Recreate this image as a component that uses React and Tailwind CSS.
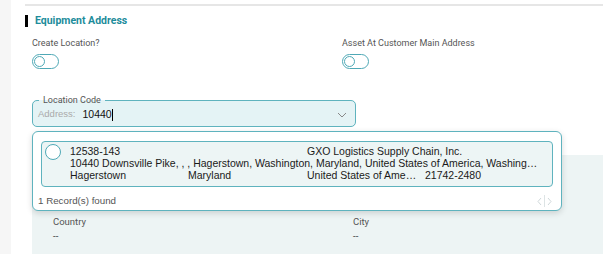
import React from 'react';

const Toggle = () => (
    <div className="w-[27px] h-[15px] rounded-full border border-[#4fa9b6] bg-white flex items-center pl-[1px]">
        <div className="w-[11px] h-[11px] rounded-full border border-[#4fa9b6] bg-white" />
    </div>
);

const App = () => {
    return (
        <div className="w-[603px] h-[254px] overflow-hidden bg-white flex font-['Roboto',sans-serif]">
            <div className="w-[11px] shrink-0 bg-[#f6f6f6]" />
            <div className="relative flex-1 pl-[14px]">
                {/* top divider */}
                <div className="mt-[4px] h-[2px] bg-[#e6e6e6]" />

                {/* section title */}
                <div className="mt-[9px] flex items-center h-[12px]">
                    <div className="w-[3px] h-[12px] bg-black" />
                    <span className="ml-[7px] text-[10.5px] font-bold text-[#1d8c9b] leading-none">Equipment Address</span>
                </div>

                {/* toggles */}
                <div className="mt-[9px] pl-[7px] grid grid-cols-[310px_1fr]">
                    <div>
                        <div className="text-[9px] text-[#555] leading-[14px]">Create Location?</div>
                        <div className="mt-[4px]"><Toggle /></div>
                    </div>
                    <div>
                        <div className="text-[9px] text-[#555] leading-[14px]">Asset At Customer Main Address</div>
                        <div className="mt-[4px]"><Toggle /></div>
                    </div>
                </div>

                {/* location code select */}
                <div className="pl-[7px] mt-[25px]">
                    <fieldset className="w-[324px] h-[33px] border border-[#5fb3be] rounded-[5px] bg-[#e4f3f5] px-[5px] pb-[3px] flex items-center">
                        <legend className="ml-[1px] px-[4px] text-[9px] text-[#555] leading-[12px]">Location Code</legend>
                        <span className="text-[9.5px] text-[#aaa] font-['Liberation_Sans',sans-serif]">Address:</span>
                        <span className="ml-[7px] text-[10.5px] text-[#111] font-['Liberation_Sans',sans-serif]">10440</span>
                        <span className="w-px h-[12px] bg-black" />
                        <svg className="ml-auto mr-[3px]" width="10" height="6" viewBox="0 0 10 6" fill="none">
                            <path d="M1 1l4 4 4-4" stroke="#888" strokeWidth="1" />
                        </svg>
                    </fieldset>
                </div>

                {/* details panel behind dropdown */}
                <div className="ml-[7px] mt-[28px] h-[120px] bg-[#edf4f4] pt-[60px] pl-[21px] grid grid-cols-[300px_1fr] text-[9.5px] text-[#555]">
                    <div>
                        <div className="leading-[14px]">Country</div>
                        <div className="leading-[14px] text-[#333]">--</div>
                    </div>
                    <div>
                        <div className="leading-[14px]">City</div>
                        <div className="leading-[14px] text-[#333]">--</div>
                    </div>
                </div>

                {/* dropdown popover */}
                <div className="absolute left-[21px] top-[131px] w-[530px] h-[80px] bg-white border border-[#5fb3be] rounded-[6px] shadow-[0_2px_6px_rgba(0,0,0,0.15)] px-[8px] pt-[9px] font-['Liberation_Sans',sans-serif] text-[10.5px] text-[#1a1a1a]">
                    <div className="h-[46px] border border-[#5fb3be] rounded-[4px] bg-[#edf5f5] flex pl-[3px] pt-[2px]">
                        <div className="w-[16px] h-[16px] rounded-full border border-[#4fa9b6] bg-white shrink-0" />
                        <div className="ml-[9px] w-[470px] leading-[12px] pt-[1px]">
                            <div className="grid grid-cols-[118px_119px_118px_1fr]">
                                <span>12538-143</span>
                                <span />
                                <span className="col-span-2">GXO Logistics Supply Chain, Inc.</span>
                            </div>
                            <div className="truncate">10440 Downsville Pike, , , Hagerstown, Washington, Maryland, United States of America, Washington County</div>
                            <div className="grid grid-cols-[118px_119px_118px_1fr]">
                                <span>Hagerstown</span>
                                <span>Maryland</span>
                                <span className="truncate pr-[6px]">United States of America</span>
                                <span>21742-2480</span>
                            </div>
                        </div>
                    </div>
                    <div className="mt-[7px] flex items-center justify-between">
                        <span className="-ml-[3px] text-[#555] text-[9.75px]">1 Record(s) found</span>
                        <div className="flex items-center gap-[2px] mr-[1px]">
                            <svg width="5" height="9" viewBox="0 0 5 9" fill="none"><path d="M4 1L1 4.5 4 8" stroke="#cfd8da" /></svg>
                            <span className="w-px h-[12px] bg-[#dde4e5]" />
                            <svg width="5" height="9" viewBox="0 0 5 9" fill="none"><path d="M1 1l3 3.5L1 8" stroke="#cfd8da" /></svg>
                        </div>
                    </div>
                </div>
            </div>
        </div>
    );
};

export default App;
